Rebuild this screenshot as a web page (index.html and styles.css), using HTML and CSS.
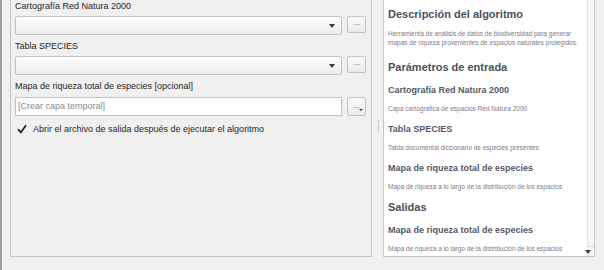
FILE: index.html
```html
<!DOCTYPE html>
<html lang="es">
<head>
    <meta charset="UTF-8">
    <meta name="viewport" content="width=device-width, initial-scale=1.0">
    <title>Riqueza de especies</title>
    <link rel="stylesheet" href="styles.css">
</head>
<body>
    <div class="dialog">
        <div class="params">
            <div class="field">
                <label>Cartografía Red Natura 2000</label>
                <div class="row">
                    <div class="combo"><span class="arrow"></span></div>
                    <button class="dots">...</button>
                </div>
            </div>
            <div class="field">
                <label>Tabla SPECIES</label>
                <div class="row">
                    <div class="combo"><span class="arrow"></span></div>
                    <button class="dots">...</button>
                </div>
            </div>
            <div class="field">
                <label>Mapa de riqueza total de especies [opcional]</label>
                <div class="row">
                    <div class="text-input">[Crear capa temporal]</div>
                    <button class="dots dots-menu">...<span class="mini-arrow"></span></button>
                </div>
            </div>
            <div class="check-row">
                <svg class="check" width="10" height="10" viewBox="0 0 10 10">
                    <path d="M1 5.2 L3.8 8.4 L9 1.2" fill="none" stroke="#1c1c1c" stroke-width="1.7"/>
                </svg>
                <span>Abrir el archivo de salida después de ejecutar el algoritmo</span>
            </div>
        </div>

        <div class="splitter"><span class="grip"></span></div>

        <div class="help">
            <div class="help-body">
                <h1>Descripción del algoritmo</h1>
                <p class="desc">Herramienta de análisis de datos de biodiversidad para generar mapas de riqueza provenientes de espacios naturales protegidos.</p>
                <h1>Parámetros de entrada</h1>
                <h3>Cartografía Red Natura 2000</h3>
                <p>Capa cartográfica de espacios Red Natura 2000</p>
                <h3>Tabla SPECIES</h3>
                <p>Tabla documental diccionario de especies presentes</p>
                <h3>Mapa de riqueza total de especies</h3>
                <p>Mapa de riqueza a lo largo de la distribución de los espacios</p>
                <h1>Salidas</h1>
                <h3>Mapa de riqueza total de especies</h3>
                <p>Mapa de riqueza a lo largo de la distribución de los espacios</p>
            </div>
            <div class="scrollbar">
                <div class="scroll-down"><span class="arrow"></span></div>
            </div>
        </div>
    </div>
</body>
</html>
```

FILE: styles.css
```css
*{
    box-sizing: border-box;
}
body{
    margin: 0;
    height: 270px;
    overflow: hidden;
    background-color: #f0f0f0;
    font-family: "Liberation Sans", Arial, sans-serif;
    color: #1e1e1e;
}
.dialog{
    display: flex;
    height: 270px;
    border-left: 2px solid #9d9d9d;
    padding-left: 8px;
}

/* left: parameters */
.params{
    width: 362px;
    height: 257px;
    border: 1px solid #c6c6c6;
    border-top: none;
    padding: 0 5px 0 4px;
}
.field{
    margin-bottom: 5px;
}
.field label{
    display: block;
    height: 13px;
    line-height: 13px;
    margin-bottom: 3px;
    font-size: 9px;
}
.row{
    display: flex;
    gap: 5px;
    align-items: flex-start;
}
.combo{
    flex-grow: 1;
    height: 19px;
    border: 1px solid #c3c3c3;
    border-radius: 2px;
    background: linear-gradient(#fcfcfc, #ededed);
    position: relative;
}
.arrow{
    position: absolute;
    right: 6px;
    top: 7px;
    width: 0;
    height: 0;
    border-left: 3px solid transparent;
    border-right: 3px solid transparent;
    border-top: 4px solid #3c3c3c;
}
.dots{
    width: 19px;
    height: 17px;
    padding: 0 0 3px;
    border: 1px solid #c3c3c3;
    border-radius: 2px;
    background: linear-gradient(#f9f9f9, #ebebeb);
    font-family: "Liberation Sans", Arial, sans-serif;
    font-size: 8px;
    line-height: 8px;
    color: #5a5a5a;
    position: relative;
}
.dots-menu{
    height: 19px;
    margin-top: 1px;
    padding-top: 2px;
}
.mini-arrow{
    position: absolute;
    right: 2px;
    bottom: 4px;
    border-left: 2px solid transparent;
    border-right: 2px solid transparent;
    border-top: 2px solid #3c3c3c;
}
.text-input{
    flex-grow: 1;
    height: 19px;
    margin-top: 1px;
    border: 1px solid #c3c3c3;
    background-color: #fff;
    padding-left: 2px;
    font-size: 9px;
    line-height: 17px;
    color: #8b8b8b;
}
.check-row{
    display: flex;
    align-items: center;
    height: 16px;
    margin-top: 4px;
    font-size: 9px;
}
.check{
    margin-left: 2px;
    margin-right: 6px;
}

/* splitter */
.splitter{
    width: 11px;
    padding-top: 120px;
}
.grip{
    display: block;
    margin-left: 6px;
    width: 1px;
    height: 12px;
    border-left: 1px dotted #b4b4b4;
}

/* right: help */
.help{
    width: 212px;
    height: 257px;
    display: flex;
    border: 1px solid #c6c6c6;
    border-top: none;
    background-color: #fff;
}
.help-body{
    flex-grow: 1;
    padding: 7px 0 0 4px;
    overflow: hidden;
}
.help h1{
    margin: 9px 0 0;
    font-size: 11px;
    line-height: 14px;
    font-weight: bold;
    color: #4b505e;
}
.help h1:first-child{
    margin-top: 0;
}
.help h3{
    margin: 10px 0 0;
    font-size: 9px;
    line-height: 12px;
    font-weight: bold;
    color: #555a67;
}
.help p{
    margin: 8px 0 0;
    font-size: 6.5px;
    line-height: 9px;
    color: #80788a;
}
.help .desc{
    padding-bottom: 4px;
}
.scrollbar{
    width: 13px;
    display: flex;
    flex-direction: column;
    justify-content: flex-end;
    background-color: #f6f6f6;
    border-left: 1px solid #e2e2e2;
}
.scroll-down{
    height: 10px;
    border-top: 1px solid #dadada;
    position: relative;
}
.scroll-down .arrow{
    right: 3px;
    top: 3px;
}
```
